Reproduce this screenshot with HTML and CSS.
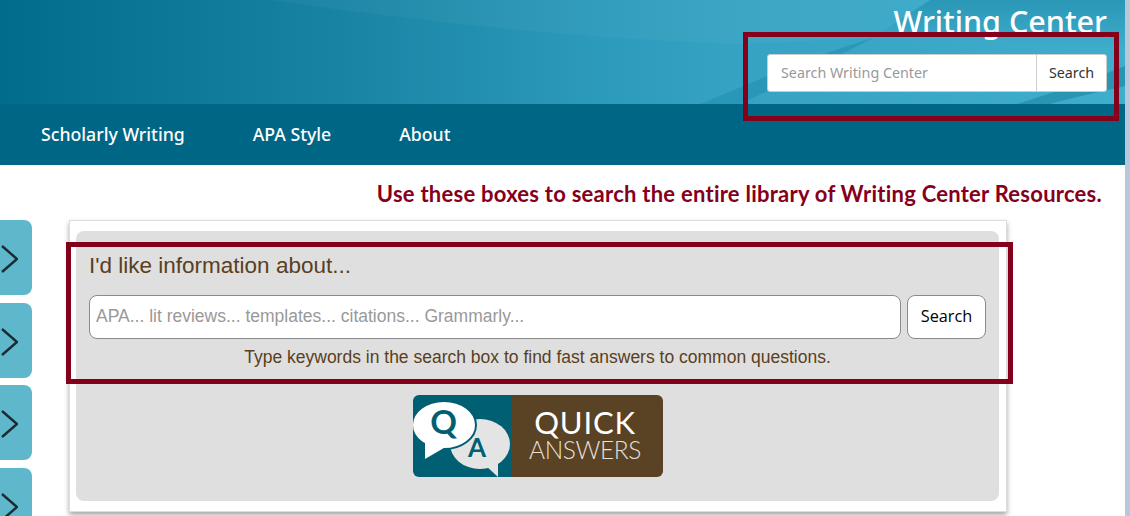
FILE: index.html
```html
<!DOCTYPE html>
<html lang="en">
<head>
    <meta charset="UTF-8">
    <meta name="viewport" content="width=device-width, initial-scale=1.0">
    <title>Writing Center</title>
    <link rel="stylesheet" href="styles.css">
</head>
<body>
    <div class="page">
        <header class="banner">
            <svg class="banner-art" viewBox="0 0 1125 104" preserveAspectRatio="none" aria-hidden="true">
                <defs>
                    <linearGradient id="bannerBase" x1="0" y1="0" x2="1" y2="0">
                        <stop offset="0" stop-color="#026c8d"/>
                        <stop offset="0.31" stop-color="#1a84a4"/>
                        <stop offset="0.53" stop-color="#2c9abb"/>
                        <stop offset="0.66" stop-color="#36a3c3"/>
                        <stop offset="1" stop-color="#3fadcc"/>
                    </linearGradient>
                    <linearGradient id="bannerCorner" x1="0" y1="0" x2="0" y2="1">
                        <stop offset="0" stop-color="#2a97b7"/>
                        <stop offset="1" stop-color="#3fadcc"/>
                    </linearGradient>
                </defs>
                <rect width="1125" height="104" fill="url(#bannerBase)"/>
                <path d="M270 0 C380 16 560 38 740 44 L873 38 L930 0 Z" fill="#fff" fill-opacity="0.035"/>
                <path d="M930 0 L1125 0 L1125 50 L873 38 Z" fill="url(#bannerCorner)"/>
                <path d="M700 104 C740 88 810 56 873 38 C830 60 780 86 740 104 Z" fill="#1f8fb0" fill-opacity="0.6"/>
                <path d="M1017 104 C1050 94 1090 80 1125 66 L1125 86 C1100 92 1070 98 1050 104 Z" fill="#2a94b3"/>
            </svg>
            <h2 class="site-title">Writing Center</h2>
            <form class="site-search">
                <input type="text" placeholder="Search Writing Center">
                <button type="button">Search</button>
            </form>
        </header>
        <nav class="main-nav">
            <a href="#">Scholarly Writing</a>
            <a href="#">APA Style</a>
            <a href="#">About</a>
        </nav>
        <p class="notice">Use these boxes to search the entire library of Writing Center Resources.</p>
        <div class="content">
            <div class="side-tabs">
                <a class="side-tab" href="#"><svg viewBox="0 0 18 30"><path d="M2 2 L17 15 L2 28"/></svg></a>
                <a class="side-tab" href="#"><svg viewBox="0 0 18 30"><path d="M2 2 L17 15 L2 28"/></svg></a>
                <a class="side-tab" href="#"><svg viewBox="0 0 18 30"><path d="M2 2 L17 15 L2 28"/></svg></a>
                <a class="side-tab" href="#"><svg viewBox="0 0 18 30"><path d="M2 2 L17 15 L2 28"/></svg></a>
            </div>
            <section class="card">
                <div class="card-inner">
                    <h3>I'd like information about...</h3>
                    <form class="qa-search">
                        <input type="text" placeholder="APA... lit reviews... templates... citations... Grammarly...">
                        <button type="button">Search</button>
                    </form>
                    <p class="qa-help">Type keywords in the search box to find fast answers to common questions.</p>
                    <div class="qa-logo">
                        <div class="qa-logo-icon">
                            <svg viewBox="0 0 98 82" aria-hidden="true">
                                <ellipse cx="67" cy="49" rx="30" ry="25" fill="#e4e4e4"/>
                                <path d="M72 70 L85 82 L85 66 Z" fill="#e4e4e4"/>
                                <ellipse cx="31" cy="30" rx="32" ry="24" fill="#fff" stroke="#005f73" stroke-width="2"/>
                                <path d="M12 42 L12 64 L36 50 Z" fill="#fff"/>
                                <text x="30.5" y="39" class="letter-q">Q</text>
                                <text x="64" y="62" class="letter-a">A</text>
                            </svg>
                        </div>
                        <div class="qa-logo-text">
                            <span class="quick">QUICK</span>
                            <span class="answers">ANSWERS</span>
                        </div>
                    </div>
                </div>
            </section>
        </div>
        <div class="highlight highlight-top"></div>
        <div class="highlight highlight-main"></div>
    </div>
</body>
</html>
```

FILE: styles.css
```css
html, body {
    margin: 0;
    padding: 0;
    height: 516px;
    overflow: hidden;
    background-color: #fff;
}
.page {
    position: relative;
    width: 1125px;
    height: 516px;
    overflow: hidden;
    border-right: 5px solid #b9c7da;
    font-family: "Liberation Sans", Arial, sans-serif;
}
.banner {
    position: relative;
    height: 104px;
    overflow: hidden;
    display: flex;
    flex-direction: column;
    align-items: flex-end;
    padding-right: 18px;
    box-sizing: border-box;
}
.banner-art {
    position: absolute;
    top: 0;
    left: 0;
    width: 100%;
    height: 100%;
}
.site-title {
    position: relative;
    margin: 3px 0 0;
    font-family: "Noto Sans", sans-serif;
    font-weight: 500;
    font-size: 30.5px;
    line-height: 36px;
    color: #fff;
}
.site-search {
    position: relative;
    display: flex;
    width: 340px;
    height: 38px;
    margin-top: 15px;
    border: 1px solid #ccc;
    border-radius: 3px;
    box-sizing: border-box;
    background-color: #fff;
}
.site-search input {
    flex: 1;
    min-width: 0;
    border: none;
    padding: 0 13px 2px;
    background: none;
    font-family: "Noto Sans", sans-serif;
    font-size: 14.3px;
    outline: none;
}
.site-search input::placeholder {
    color: #999;
    opacity: 1;
}
.site-search button {
    width: 70px;
    border: none;
    border-left: 1px solid #ccc;
    background: none;
    padding: 0 0 2px;
    font-family: "Noto Sans", sans-serif;
    font-size: 14.3px;
    color: #333;
}
.main-nav {
    display: flex;
    gap: 68px;
    height: 61px;
    box-sizing: border-box;
    align-items: center;
    padding: 0 0 2px 41px;
    background-color: #006685;
}
.main-nav a {
    font-family: "Noto Sans", sans-serif;
    font-size: 17.7px;
    font-weight: 500;
    color: #fff;
    text-decoration: none;
}
.notice {
    margin: 16px 23px 0 0;
    height: 39px;
    text-align: right;
    font-family: "Lato", sans-serif;
    font-weight: bold;
    font-size: 22px;
    letter-spacing: 0.25px;
    line-height: 26px;
    color: #85001a;
}
.content {
    display: flex;
    align-items: flex-start;
}
.side-tabs {
    display: flex;
    flex-direction: column;
    gap: 7.6px;
    width: 32px;
    margin-right: 37px;
    flex-shrink: 0;
}
.side-tab {
    display: flex;
    align-items: center;
    flex-shrink: 0;
    height: 75px;
    padding-top: 3px;
    box-sizing: border-box;
    background-color: #5fb7cc;
    border-radius: 0 8px 8px 0;
}
.side-tab svg {
    width: 18px;
    height: 30px;
    fill: none;
    stroke: #1c2b33;
    stroke-width: 2.4;
}
.card {
    width: 938px;
    height: 292px;
    box-sizing: border-box;
    padding: 10px 7px 10px 6px;
    background-color: #fff;
    border: 1px solid #ddd;
    box-shadow: 0 3px 5px rgba(0, 0, 0, 0.35);
}
.card-inner {
    height: 270px;
    box-sizing: border-box;
    padding: 20px 13px 0;
    background-color: #dfdfdf;
    border-radius: 8px;
    color: #5a4020;
}
.card-inner h3 {
    margin: 0;
    font-weight: normal;
    font-size: 22.5px;
    line-height: 30px;
}
.qa-search {
    display: flex;
    gap: 6px;
    margin-top: 14px;
}
.qa-search input {
    flex: none;
    width: 812px;
    height: 44px;
    box-sizing: border-box;
    padding: 0 6px 2px;
    border: 1px solid #8a8a8a;
    border-radius: 8px;
    background-color: #fff;
    font-family: "Liberation Sans", Arial, sans-serif;
    font-size: 17.5px;
    outline: none;
}
.qa-search input::placeholder {
    color: #999;
    opacity: 1;
}
.qa-search button {
    width: 79px;
    height: 44px;
    padding: 0 0 2px;
    border: 1px solid #8a8a8a;
    border-radius: 8px;
    background-color: #fff;
    font-family: "Open Sans", sans-serif;
    font-size: 16.3px;
    color: #000;
}
.qa-help {
    margin: 8px 0 0;
    text-align: center;
    font-size: 17.5px;
    line-height: 20px;
    width: 897px;
}
.qa-logo {
    display: flex;
    width: 250px;
    height: 82px;
    margin: 28px auto 0;
    border-radius: 6px;
    overflow: hidden;
}
.qa-logo-icon {
    width: 98px;
    background-color: #005f73;
}
.qa-logo-icon svg {
    display: block;
    width: 98px;
    height: 82px;
}
.letter-q,
.letter-a {
    font-family: "Lato", sans-serif;
    font-weight: bold;
    text-anchor: middle;
    fill: #005f73;
}
.letter-q {
    font-size: 33px;
}
.letter-a {
    font-size: 26px;
}
.qa-logo-text {
    flex: 1;
    display: flex;
    flex-direction: column;
    align-items: center;
    justify-content: center;
    padding: 0 3px 2px 0;
    background-color: #5a4224;
    font-family: "Lato", sans-serif;
    color: #fff;
}
.quick {
    font-size: 31px;
    line-height: 29px;
    font-weight: normal;
    letter-spacing: 0.8px;
}
.answers {
    font-size: 24.5px;
    line-height: 25px;
    font-weight: 300;
    color: #e6e0d8;
    letter-spacing: -0.4px;
}
.highlight {
    position: absolute;
    box-sizing: border-box;
    border: 5px solid #85001a;
    pointer-events: none;
}
.highlight-top {
    left: 743px;
    top: 32px;
    width: 376px;
    height: 89px;
}
.highlight-main {
    left: 66px;
    top: 242px;
    width: 947px;
    height: 142px;
}
```
